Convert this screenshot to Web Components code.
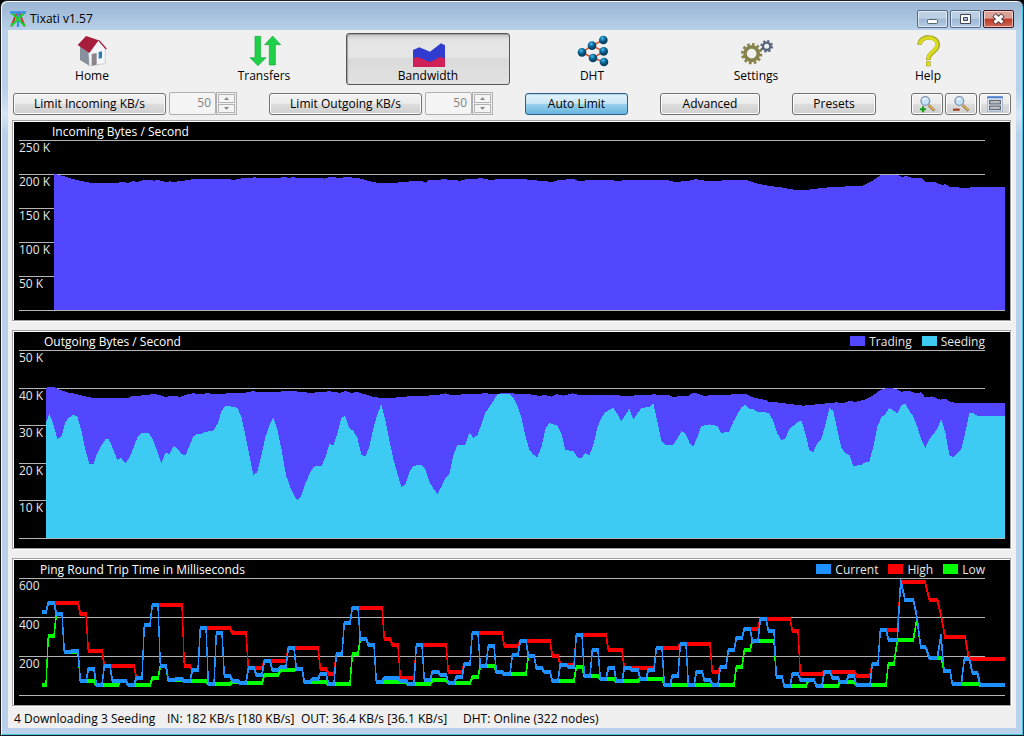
<!doctype html>
<html lang="en">
<head>
<meta charset="UTF-8" />
<meta name="viewport" content="width=device-width, initial-scale=1">
<title>Tixati v1.57</title>
<style>
	body {
		margin: 0;
		background: #000;
		color: #000;
		font: 12px/16px "Open Sans", "Noto Sans", sans-serif;
	}
</style>
</head>
<body>

<template id="app-window">
	<style>
		:host {
			display: flex;
			flex-direction: column;
			box-sizing: border-box;
			min-height: 100vh;
			border: 1px solid #1c1c20;
			border-radius: 7px 7px 0 0;
			padding: 0 6px 6px;
			box-shadow: inset 1px 1px 0 #f4f9fd, inset -1px -1px 0 #3fc4e4;
			background: linear-gradient(#98b4d2, #b9d1ea 30px, #b9d1ea 90px, #d6e5f5 114px, #b9d1ea 132px);
		}
		header {
			display: flex;
			align-items: center;
			gap: 4px;
			height: 29px;
			padding: 0 3px;
		}
		::slotted(svg) { width: 16px; height: 16px; margin-top: 6px; }
		h1 { flex: 1; margin: 6px 0 0; font: inherit; }
		.controls { display: flex; gap: 2px; margin-top: 6px; }
		.controls button {
			box-sizing: border-box;
			width: 31px;
			height: 18px;
			padding: 0;
			border: 1px solid #566a86;
			border-radius: 2px;
			box-shadow: inset 0 0 0 1px #ffffff90;
			background: linear-gradient(#bccfe5 45%, #9db7d4 50%, #b4cbe5);
		}
		.controls .close {
			border-color: #47141a;
			background: linear-gradient(#dba095 45%, #bb3a23 50%, #d0695a);
		}
		.controls svg { display: block; width: 29px; height: 16px; }
		main {
			flex: 1;
			display: flex;
			flex-direction: column;
			margin: 0 1px 1px;
			background: #f0f0f0;
		}
	</style>
	<header>
		<slot name="icon"></slot>
		<h1><slot name="title"></slot></h1>
		<div class="controls">
			<button aria-label="Minimize"><svg viewBox="0 0 29 16"><rect x="9.500" y="8.500" width="10" height="4" rx="1" fill="#fff" stroke="#566"/></svg></button>
			<button aria-label="Maximize"><svg viewBox="0 0 29 16"><path d="M9.500 3.500h10v9h-10z M12.500 6.500h4v3h-4z" fill="#fff" fill-rule="evenodd" stroke="#445"/></svg></button>
			<button class="close" aria-label="Close"><svg viewBox="0 0 29 16"><path d="M10 4l9 8M19 4l-9 8" stroke="#443038" stroke-width="5"/><path d="M10.500 4.500l8 7M18.500 4.500l-8 7" stroke="#fff" stroke-width="3"/></svg></button>
		</div>
	</header>
	<main><slot></slot></main>
</template>

<template id="nav-item">
	<style>
		:host { display: block; flex: 1; }
		button {
			display: flex;
			flex-direction: column;
			align-items: center;
			gap: 1px;
			box-sizing: border-box;
			width: 100%;
			height: 52px;
			padding: 1px 0 0;
			border: 1px solid transparent;
			border-radius: 3px;
			background: none;
			color: inherit;
			font: inherit;
		}
		:host([active]) button {
			border-color: #565656;
			background: linear-gradient(#c8c8c8, #e3e3e3 6px, #e6e6e6 45%, #dadada 50%, #e2e2e2);
			box-shadow: inset 1px 1px 1px #a0a0a0;
		}
	</style>
	<button><slot name="icon"></slot><slot></slot></button>
</template>

<template id="push-button">
	<style>
		:host { display: block; }
		button {
			display: flex;
			align-items: center;
			justify-content: center;
			box-sizing: border-box;
			width: 100%;
			height: 22px;
			padding: 0;
			border: 1px solid #707070;
			border-radius: 3px;
			box-shadow: inset 0 0 0 1px #fcfcfc;
			background: linear-gradient(#f2f2f2, #ebebeb 50%, #dddddd 50%, #cfcfcf);
			color: inherit;
			font: inherit;
		}
		:host([pressed]) button {
			border-color: #2c628b;
			box-shadow: inset 0 1px 1px #b6cfdd;
			background: linear-gradient(#e5f4fc, #c4e5f6 50%, #98d1ef 50%, #68b3db);
		}
	</style>
	<button><slot></slot></button>
</template>

<template id="spin-box">
	<style>
		:host { display: flex; height: 23px; }
		input {
			box-sizing: border-box;
			width: 47px;
			padding: 0 4px 1px 0;
			border: 1px solid #afafaf;
			border-radius: 2px;
			background: #f4f4f4;
			color: #838383;
			font: inherit;
			text-align: right;
		}
		div {
			display: grid;
			gap: 1px;
			box-sizing: border-box;
			width: 21px;
			padding: 1px;
			border: 1px solid #afafaf;
		}
		button { display: grid; place-items: center; padding: 0; border: 1px solid #b4b4b4; background: #f4f4f4; }
		svg { display: block; width: 5px; height: 3px; }
	</style>
	<input type="text" disabled>
	<div>
		<button disabled aria-label="Increase"><svg viewBox="0 0 5 3"><path d="M0 3L2.500 0L5 3z" fill="#888"/></svg></button>
		<button disabled aria-label="Decrease"><svg viewBox="0 0 5 3"><path d="M0 0L2.500 3L5 0z" fill="#888"/></svg></button>
	</div>
</template>

<template id="traffic-chart">
	<style>
		:host {
			display: flex;
			flex-direction: column;
			box-sizing: border-box;
			border: 1px solid #a0a0a0;
			box-shadow: 1px 1px 0 #fff, inset 1px 1px 0 #fff;
			padding: 1px 5px 9px 6px;
			background: #000;
			color: #e6e6e6;
		}
		header {
			display: flex;
			gap: 10px;
			height: 18px;
			padding-right: 20px;
			line-height: 19px;
		}
		h2 { flex: 1; margin: 0 0 0 calc(var(--gutter) - 2px); font: inherit; line-height: 19px; color: #fff; }
		.key { display: flex; align-items: center; gap: 4px; }
		.key::before { content: ""; width: 15px; height: 10px; background: var(--swatch); }
		.plot { flex: 1; display: grid; }
		.scale, svg { grid-area: 1 / 1; }
		.scale { display: flex; flex-direction: column; }
		.scale span { flex: 1 1 0; margin-right: 20px; border-top: 1px solid #b4b4b4; box-sizing: border-box; line-height: 13px; }
		.scale i { height: 1px; background: #b4b4b4; }
		svg {
			width: calc(100% - var(--gutter));
			height: calc(100% - 1px);
			min-height: 0;
			margin-left: var(--gutter);
			overflow: visible;
			contain: size;
		}
	</style>
	<header><h2></h2></header>
	<div class="plot">
		<div class="scale"></div>
		<svg preserveAspectRatio="none" shape-rendering="crispEdges" aria-hidden="true"></svg>
	</div>
</template>

<template id="bandwidth-page">
	<style>
		:host { flex: 1; display: flex; flex-direction: column; }
		svg { display: block; overflow: visible; }
		nav { display: flex; padding: 3px 6px 0 2px; }
		nav svg { width: 32px; height: 32px; }
		nav nav-item:first-child { margin-right: 8px; }
		nav nav-item:last-child { margin-left: 8px; }
		.tools { display: flex; gap: 32px; align-items: flex-end; padding: 7px 5px 5px; }
		.group { display: flex; align-items: flex-end; gap: 3px; }
		.icons { gap: 2px; margin-left: auto; }
		.limit { width: 153px; }
		.auto { width: 103px; }
		.advanced { width: 100px; }
		.presets { width: 84px; }
		.icons push-button { width: 32px; }
		.icons svg { width: 16px; height: 16px; }
		.charts { flex: 1; display: grid; grid-template-rows: 201fr 219fr 148fr; gap: 9px; padding: 0 5px 1px 4px; }
		.incoming { --gutter: 35px; }
		.outgoing { --gutter: 27px; }
		.ping { --gutter: 23px; }
		footer { display: grid; grid-template-columns: 87px 66px 134px 162px auto; padding: 4px 6px 1px; }
	</style>
	<nav>
		<nav-item>
			<svg slot="icon" viewBox="0 0 96 96">
				<path d="M12 34L38 52L40 92L12 75z" fill="#87909c"/>
				<path d="M38 52L68 15L88 38V86L40 92z" fill="#f4f6fa" stroke="#b8bcc4" stroke-width="2"/>
				<path d="M47 57L62 54V89L47 92z" fill="#8c8488"/>
				<path d="M68 51L78 49V69L68 71z" fill="#2b7fae"/>
				<path d="M5 30L30 3L68 16L40 54z" fill="#a81d3c"/>
				<path d="M68 16L91 42" stroke="#a81d3c" stroke-width="4"/>
			</svg>Home
		</nav-item>
		<nav-item>
			<svg slot="icon" viewBox="0 0 96 96">
				<g fill="#1fd148" stroke="#1ba53c" stroke-width="2">
					<path d="M21 4H38V68L54 68L30 92L6 68L21 68z"/>
					<path d="M64 90H82V29L98 29L74 3L50 29L64 29z"/>
				</g>
			</svg>Transfers
		</nav-item>
		<nav-item active>
			<svg slot="icon" viewBox="0 0 96 96">
				<path d="M3 45L22 37L54 50L87 25L99 31V96H3z" fill="#303cd0"/>
				<path d="M3 71L16 65L54 81L86 65L99 71V96H3z" fill="#cf2057"/>
			</svg>Bandwidth
		</nav-item>
		<nav-item>
			<svg slot="icon" viewBox="0 0 96 96">
				<defs><radialGradient id="ball" cx=".4" cy=".3"><stop offset="0" stop-color="#5cc4ee"/><stop offset=".4" stop-color="#1583b8"/><stop offset="1" stop-color="#084468"/></radialGradient></defs>
				<path d="M82 15L48 32L18 52L51 69L84 81M48 32L83 49L51 69" fill="none" stroke="#dd5630" stroke-width="5"/>
				<g fill="url(#ball)"><circle cx="82" cy="15" r="13"/><circle cx="48" cy="32" r="13"/><circle cx="83" cy="49" r="13"/><circle cx="18" cy="52" r="13"/><circle cx="51" cy="69" r="13"/><circle cx="84" cy="81" r="13"/></g>
			</svg>DHT
		</nav-item>
		<nav-item>
			<svg slot="icon" viewBox="0 0 96 96">
				<g fill="none" stroke="#85824c">
					<circle cx="35" cy="56" r="20" stroke-width="11"/>
					<circle cx="35" cy="56" r="28" stroke-width="8" stroke-dasharray="8 6.660"/>
				</g>
				<g fill="none" stroke="#56647a">
					<circle cx="80" cy="34" r="11" stroke-width="7"/>
					<circle cx="80" cy="34" r="16" stroke-width="6" stroke-dasharray="6.500 6.070"/>
				</g>
			</svg>Settings
		</nav-item>
		<nav-item>
			<svg slot="icon" viewBox="0 0 96 96">
				<g fill="none" stroke="#a5a52a" stroke-width="14">
					<path d="M23 29C23 0 77 0 77 30C77 51 49 49 49 75M49 79V94"/>
				</g>
				<g fill="none" stroke="#dcdc1e" stroke-width="10">
					<path d="M24 27C26 2 75 2 75 30C75 50 49 48 49 73M49 81V92"/>
				</g>
			</svg>Help
		</nav-item>
	</nav>
	<div class="tools">
		<div class="group">
			<push-button class="limit">Limit Incoming KB/s</push-button>
			<spin-box label="Incoming limit" value="50"></spin-box>
		</div>
		<div class="group">
			<push-button class="limit">Limit Outgoing KB/s</push-button>
			<spin-box label="Outgoing limit" value="50"></spin-box>
		</div>
		<push-button class="auto" pressed>Auto Limit</push-button>
		<push-button class="advanced">Advanced</push-button>
		<push-button class="presets">Presets</push-button>
		<div class="group icons">
			<push-button label="Zoom in">
				<svg viewBox="0 0 48 48">
					<path d="M29 27L46 44" stroke="#8c6a32" stroke-width="8"/><path d="M29 26L45 42" stroke="#eebd5c" stroke-width="4"/>
					<circle cx="19" cy="15" r="13" fill="#c5e2f8" stroke="#8296b4" stroke-width="4"/>
					<path d="M12 12Q16 6 23 8" fill="none" stroke="#fff" stroke-width="4"/>
					<path d="M12 31V49M3 40H21" stroke="#12a012" stroke-width="6"/>
				</svg>
			</push-button>
			<push-button label="Zoom out">
				<svg viewBox="0 0 48 48">
					<path d="M29 27L46 44" stroke="#8c6a32" stroke-width="8"/><path d="M29 26L45 42" stroke="#eebd5c" stroke-width="4"/>
					<circle cx="19" cy="15" r="13" fill="#c5e2f8" stroke="#8296b4" stroke-width="4"/>
					<path d="M12 12Q16 6 23 8" fill="none" stroke="#fff" stroke-width="4"/>
					<path d="M0 41H20" stroke="#a33310" stroke-width="6"/>
				</svg>
			</push-button>
			<push-button label="View options">
				<svg viewBox="0 0 48 48">
					<rect x="2" y="2" width="44" height="44" fill="#eef3fb" stroke="#9fb2d2" stroke-width="3"/>
					<path d="M1 4H47" stroke="#4f7fd0" stroke-width="6"/>
					<rect x="8" y="13" width="32" height="11" fill="#b9bec8" stroke="#50545c" stroke-width="3"/>
					<rect x="8" y="30" width="32" height="11" fill="#b9bec8" stroke="#50545c" stroke-width="3"/>
				</svg>
			</push-button>
		</div>
	</div>
	<div class="charts">
		<traffic-chart class="incoming" source="incoming"></traffic-chart>
		<traffic-chart class="outgoing" source="outgoing"></traffic-chart>
		<traffic-chart class="ping" source="ping"></traffic-chart>
	</div>
	<footer>
		<span>4 Downloading</span><span>3 Seeding</span><span>IN: 182 KB/s [180 KB/s]</span><span>OUT: 36.4 KB/s [36.1 KB/s]</span><span>DHT: Online (322 nodes)</span>
	</footer>
</template>

<script>
'use strict'

// Areas are x,y pairs in the chart's own viewBox. Ping series have one y per
// sample, followed by x,y pairs for the most recent, unevenly timed samples.
const charts = {
	incoming: {
		title: 'Incoming Bytes / Second',
		ticks: ['250 K', '200 K', '150 K', '100 K', '50 K'],
		viewBox: '162 60 2853 510',
		series: [{
			color: '#5247ff',
			points: `162,162 168,163 190,168 205,173 230,180 255,185 272,189 355,189 362,186 375,186 380,189 390,187 400,183
				412,186 430,180 455,180 461,183 470,180 485,182 495,186 510,184 520,186 545,183 575,178 690,178 700,180
				725,175 765,172 775,174 835,174 850,171 865,173 880,172 900,174 960,174 975,176 990,171 1005,172 1020,174
				1036,171 1076,174 1104,182 1133,189 1182,189 1216,185 1266,183 1277,188 1287,180 1334,178 1381,182 1400,177
				1445,175 1465,179 1544,177 1575,178 1616,182 1659,186 1674,180 1720,177 1733,182 1829,180 1858,183 1877,180
				1923,181 1956,180 2002,180 2025,186 2063,183 2087,177 2120,183 2159,182 2185,180 2244,181 2270,190 2303,197
				2342,202 2381,209 2427,209 2473,203 2545,199 2587,197 2617,183 2643,165 2693,165 2706,171 2718,168 2735,173
				2764,174 2777,186 2803,186 2826,195 2837,192 2850,201 2905,204 2918,201 3015,201`
		}]
	},
	outgoing: {
		title: 'Outgoing Bytes / Second',
		ticks: ['50 K', '40 K', '30 K', '20 K', '10 K'],
		viewBox: '138 75 2877 564',
		series: [{
			name: 'Trading',
			color: '#5247ff',
			points: `138,189 142,186 163,186 175,193 190,198 205,203 225,206 240,210 255,214 275,218 322,218 330,220 340,218
				385,218 395,214 420,213 432,209 470,208 485,212 497,217 510,213 540,215 560,209 580,205 600,207 620,205
				640,206 720,205 740,202 760,198 775,202 830,202 845,199 890,199 900,202 940,203 960,201 990,199 1005,202
				1020,203 1036,198 1050,203 1075,202 1095,208 1125,217 1165,219 1210,216 1235,213 1280,214 1290,210 1330,208
				1336,205 1350,210 1395,208 1405,206 1440,206 1455,205 1490,207 1510,204 1535,205 1550,206 1585,207 1615,212
				1640,211 1655,215 1670,208 1690,212 1718,205 1735,210 1850,210 1865,212 1900,212 1920,209 1950,210 1960,207
				1980,211 2008,210 2020,217 2040,213 2065,212 2080,203 2090,205 2115,214 2130,210 2180,211 2195,208 2235,206
				2250,213 2270,220 2300,226 2305,230 2340,233 2370,237 2410,242 2440,239 2470,236 2510,232 2530,234 2550,228
				2565,231 2595,224 2615,214 2640,196 2660,189 2685,191 2705,200 2725,197 2745,204 2764,202 2775,217 2795,214
				2820,224 2837,221 2852,232 2890,234 2920,233 3015,234`
		}, {
			name: 'Seeding',
			color: '#3dcaf3',
			points: `138,293 148,266 160,298 172,341 184,336 196,291 208,277 220,270 232,274 244,317 256,374 268,416 280,419
				292,384 304,362 316,343 326,342 340,374 352,404 364,399 376,416 388,398 400,370 412,337 424,324 446,324
				460,346 472,380 484,416 496,383 508,387 520,363 532,370 544,387 556,391 568,363 580,334 592,327 606,326
				616,321 640,317 654,294 664,258 676,243 688,243 700,246 712,248 724,275 736,330 748,390 760,449 772,441
				784,392 796,336 808,302 820,276 832,314 844,370 858,450 870,485 880,507 892,527 904,513 916,476 928,448
				940,426 952,423 964,423 976,398 988,356 1000,362 1012,327 1024,279 1036,273 1048,309 1060,318 1072,338
				1084,389 1096,395 1108,366 1120,310 1132,267 1144,237 1156,285 1168,345 1180,402 1192,444 1204,486 1216,480
				1228,442 1240,423 1264,419 1276,432 1288,470 1300,490 1312,507 1324,486 1336,460 1348,447 1360,392 1372,360
				1396,359 1408,323 1420,338 1432,330 1444,298 1456,262 1468,247 1480,228 1492,208 1504,207 1530,207 1540,219
				1552,243 1564,277 1576,332 1588,374 1600,389 1612,396 1624,367 1636,313 1648,294 1672,302 1684,325 1696,375
				1720,378 1732,397 1744,401 1756,383 1768,392 1780,360 1792,308 1804,279 1816,262 1840,248 1852,267 1864,288
				1888,252 1900,283 1924,249 1948,246 1960,234 1972,290 1984,347 1996,359 2018,359 2030,345 2044,318 2056,325
				2068,352 2080,365 2092,336 2104,303 2128,298 2152,303 2164,324 2188,319 2200,290 2224,247 2236,240 2248,251
				2260,252 2272,261 2296,262 2308,266 2320,288 2332,325 2344,346 2356,340 2368,313 2380,302 2392,292 2404,286
				2416,325 2428,375 2440,381 2452,355 2464,342 2476,300 2488,250 2500,258 2512,315 2524,369 2536,384 2548,390
				2560,423 2584,420 2596,411 2608,410 2620,365 2632,305 2644,277 2656,267 2668,249 2680,257 2692,265 2704,240
				2716,236 2728,258 2740,275 2752,305 2764,345 2776,369 2788,342 2800,328 2812,310 2824,282 2836,322 2848,389
				2860,398 2872,386 2884,371 2896,322 2908,264 2920,265 2932,273 3015,273`
		}]
	},
	ping: {
		title: 'Ping Round Trip Time in Milliseconds',
		ticks: ['600', '400', '200'],
		viewBox: '126 69 2889 351',
		series: [{
			name: 'Current',
			color: '#1e90ff',
			samples: [171, 143, 177, 291, 287, 378, 342, 390, 332, 378, 378, 390, 369, 209, 150, 332, 375, 372, 378, 345, 218,
				387, 234, 363, 378, 384, 339, 360, 318, 345, 336, 279, 342, 381, 372, 356, 387, 297, 203, 158, 251, 269, 381,
				369, 369, 377, 387, 269, 376, 351, 359, 384, 366, 326, 233, 333, 272, 351, 357, 299, 257, 302, 339, 351, 378,
				329, 335, 239, 363, 285, 372, 339, 378, 339, 345, 372, 345, 279, 390, 363, 267, 390, 351, 375, 390, 336, 285,
				249, 221, 258, 191, 227, 366, 393, 357, 375, 375, 393, 350, 369, 381, 363, 390, 390, 326, 224, 254],
			tail: `2692,254 2702,77 2715,134 2740,134 2750,182 2762,275 2776,275 2788,309 2812,309 2823,241 2832,347 2850,347
				2857,386 2884,386 2893,311 2908,311 2917,353 2932,353 2941,390 3013,390`
		}, {
			name: 'High',
			color: '#ff0000',
			samples: [171, 143, 143, 143, 143, 177, 287, 287, 332, 332, 332, 332, 369, 209, 150, 150, 150, 150, 332, 345, 218,
				218, 218, 218, 233, 233, 339, 339, 318, 318, 318, 279, 279, 279, 279, 342, 356, 297, 203, 158, 158, 158, 158,
				251, 269, 369, 369, 269, 269, 269, 269, 351, 351, 326, 233, 233, 233, 233, 272, 272, 257, 257, 257, 257, 302,
				329, 329, 239, 239, 239, 239, 285, 285, 339, 339, 339, 339, 279, 279, 279, 267, 267, 267, 267, 351, 336, 285,
				249, 221, 221, 191, 191, 191, 191, 227, 357, 357, 357, 350, 350, 350, 350, 362, 362, 326, 224, 224],
			tail: `2692,224 2702,81 2775,81 2788,134 2812,134 2824,185 2835,245 2895,245 2907,311 3013,311`
		}, {
			name: 'Low',
			color: '#00ff00',
			samples: [390, 243, 177, 291, 291, 378, 378, 390, 390, 390, 378, 390, 390, 390, 369, 334, 376, 376, 378, 378, 378,
				387, 387, 387, 381, 384, 384, 384, 360, 360, 345, 345, 342, 381, 381, 381, 387, 387, 387, 297, 251, 269, 381,
				381, 381, 381, 387, 387, 387, 376, 376, 384, 384, 384, 366, 333, 333, 351, 357, 357, 357, 302, 339, 351, 378,
				378, 378, 336, 363, 363, 372, 372, 378, 378, 378, 372, 372, 372, 390, 390, 390, 390, 390, 390, 390, 390, 390,
				336, 285, 258, 258, 258, 366, 393, 393, 393, 375, 393, 393, 393, 381, 381, 390, 390, 390, 390, 326],
			tail: `2692,254 2740,254 2751,190 2762,275 2776,275 2788,309 2824,309 2832,347 2850,347 2857,386 2933,386
				2941,390 3013,390`
		}]
	}
};

const parsePoints = text => text.trim().split(/\s+/).map(pair => pair.split(',').map(Number));

const areaPath = (points, bottom) => `M${points[0][0]} ${bottom}L${points.join(' ')}V${bottom}z`;

// Each sample is a short flat step, joined to the next one by a steep slope.
// The pen is taller than it is wide, so the line is swept as a closed band.
function bandPath(samples, tail) {
	const points = [];
	samples.forEach((y, i) => {
		const x = 121 + i * 24;
		points.push([Math.max(x, 127), y], [x + 17, y]);
	});
	points.push(...parsePoints(tail));
	const upper = points.map(([x, y]) => [x, y - 4]);
	const lower = points.map(([x, y]) => [x, y + 4]).reverse();
	return `M${upper.join(' ')} ${lower.join(' ')}z`;
}

class TemplateElement extends HTMLElement {
	constructor() {
		super();
		const template = document.getElementById(this.localName);
		this.attachShadow({ mode: 'open' }).appendChild(document.importNode(template.content, true));
	}
}

customElements.define('app-window', class extends TemplateElement {});
customElements.define('nav-item', class extends TemplateElement {
	connectedCallback() {
		if (this.hasAttribute('active')) this.shadowRoot.querySelector('button').setAttribute('aria-current', 'page');
	}
});

customElements.define('push-button', class extends TemplateElement {
	connectedCallback() {
		const button = this.shadowRoot.querySelector('button');
		if (this.hasAttribute('label')) button.setAttribute('aria-label', this.getAttribute('label'));
		if (this.hasAttribute('pressed')) button.setAttribute('aria-pressed', 'true');
	}
});

customElements.define('spin-box', class extends TemplateElement {
	connectedCallback() {
		const input = this.shadowRoot.querySelector('input');
		input.value = this.getAttribute('value');
		input.setAttribute('aria-label', this.getAttribute('label'));
	}
});

customElements.define('traffic-chart', class extends TemplateElement {
	connectedCallback() {
		const chart = charts[this.getAttribute('source')];
		const root = this.shadowRoot;
		root.querySelector('h2').textContent = chart.title;
		for (const series of chart.series) {
			if (!series.name) continue;
			const key = document.createElement('span');
			key.className = 'key';
			key.textContent = series.name;
			key.style.setProperty('--swatch', series.color);
			root.querySelector('header').appendChild(key);
		}
		root.querySelector('.scale').innerHTML = chart.ticks.map(tick => `<span>${tick}</span>`).join('') + '<i></i>';

		const svg = root.querySelector('svg');
		svg.setAttribute('viewBox', chart.viewBox);
		const [, top, , height] = chart.viewBox.split(' ').map(Number);
		const shapes = chart.series.map(series => series.samples
			? `<path d="${bandPath(series.samples, series.tail)}" fill="${series.color}" stroke="${series.color}" stroke-width="4"/>`
			: `<path d="${areaPath(parsePoints(series.points), top + height)}" fill="${series.color}"/>`);
		// the current ping lies over its high and low marks
		if (chart.series[0].samples) shapes.push(shapes.shift());
		svg.innerHTML = shapes.join('');
	}
});

customElements.define('bandwidth-page', class extends TemplateElement {});
</script>

<app-window>
	<svg slot="icon" viewBox="0 0 48 48" aria-hidden="true">
		<path d="M20 6L4 46M28 6L44 46" stroke="#d42a2a" stroke-width="6"/>
		<path d="M24 2V48" stroke="#3c8fe8" stroke-width="7"/>
		<path d="M4 4L45 45M44 4L3 45" stroke="#1fce33" stroke-width="7"/>
		<path d="M0 4H48" stroke="#3c8fe8" stroke-width="7"/>
	</svg>
	<span slot="title">Tixati v1.57</span>
	<bandwidth-page></bandwidth-page>
</app-window>

</body>
</html>
